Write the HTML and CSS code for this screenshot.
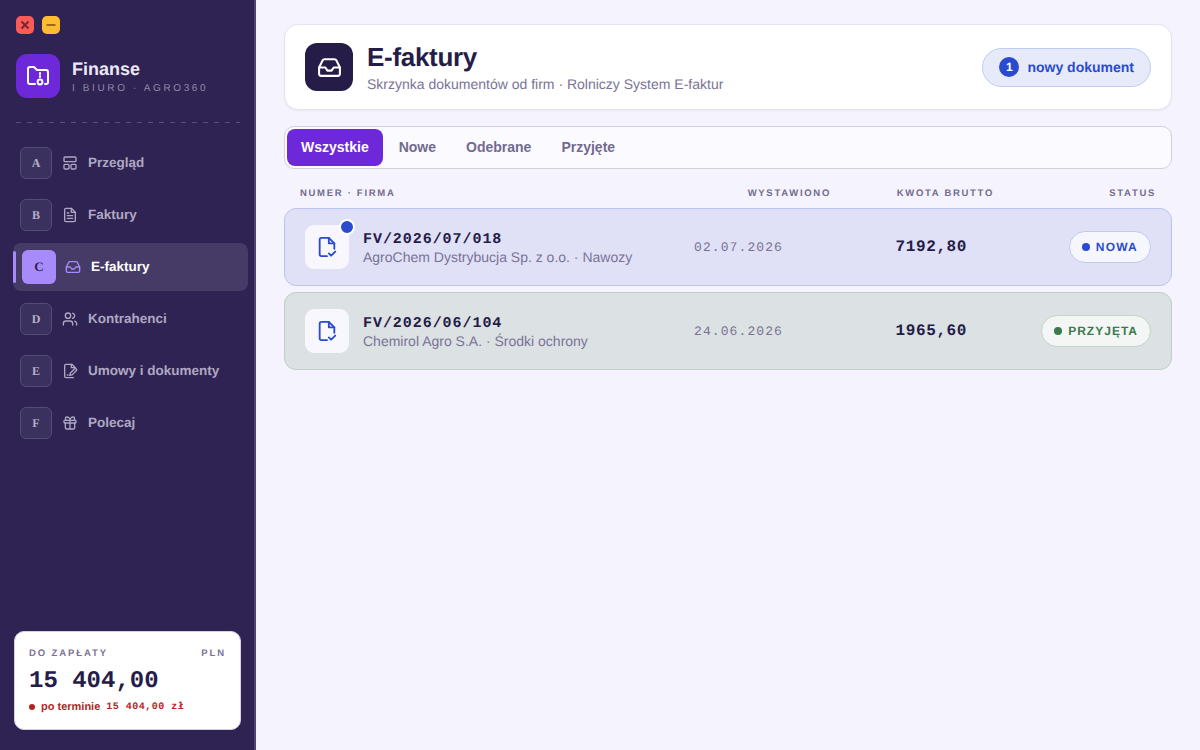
FILE: index.html
```html
<!DOCTYPE html>
<html lang="pl">
<head>
    <meta charset="UTF-8">
    <title>E-faktury</title>
    <link rel="stylesheet" href="styles.css">
</head>
<body>
    <aside class="sidebar">
        <div class="win-buttons">
            <span class="win-btn win-close">
                <svg viewBox="0 0 10 10" width="10" height="10"><path d="M1.5 1.5l7 7M8.5 1.5l-7 7"/></svg>
            </span>
            <span class="win-btn win-min">
                <svg viewBox="0 0 10 10" width="10" height="10"><path d="M0.5 5h9"/></svg>
            </span>
        </div>

        <div class="brand">
            <div class="brand-logo">
                <svg viewBox="0 0 24 24" width="24" height="24" class="ico"><path d="M9 20H4a2 2 0 0 1-2-2V5a2 2 0 0 1 2-2h4l3 3h9a2 2 0 0 1 2 2v10a2 2 0 0 1-2 2h-1"/><path d="M14 9v1M14 12v1"/><circle cx="14" cy="18" r="2.4"/></svg>
            </div>
            <div>
                <div class="brand-name">Finanse</div>
                <div class="brand-sub">I BIURO · AGRO360</div>
            </div>
        </div>

        <div class="divider"></div>

        <nav class="nav">
            <a class="nav-item">
                <span class="nav-key">A</span>
                <svg viewBox="0 0 24 24" width="16" height="16" class="ico"><rect x="3" y="3" width="18" height="7" rx="1.5"/><rect x="3" y="14" width="7.5" height="7" rx="1.5"/><rect x="13.5" y="14" width="7.5" height="7" rx="1.5"/></svg>
                <span>Przegląd</span>
            </a>
            <a class="nav-item">
                <span class="nav-key">B</span>
                <svg viewBox="0 0 24 24" width="16" height="16" class="ico"><path d="M14 2H6a2 2 0 0 0-2 2v16a2 2 0 0 0 2 2h12a2 2 0 0 0 2-2V8z"/><path d="M14 2v6h6M8 13h8M8 17h8M8 9h2"/></svg>
                <span>Faktury</span>
            </a>
            <a class="nav-item active">
                <span class="nav-key">C</span>
                <svg viewBox="0 0 24 24" width="16" height="16" class="ico"><path d="M22 12h-6l-2 3h-4l-2-3H2"/><path d="M5.45 5.11L2 12v6a2 2 0 0 0 2 2h16a2 2 0 0 0 2-2v-6l-3.45-6.89A2 2 0 0 0 16.76 4H7.24a2 2 0 0 0-1.79 1.11z"/></svg>
                <span>E-faktury</span>
            </a>
            <a class="nav-item">
                <span class="nav-key">D</span>
                <svg viewBox="0 0 24 24" width="16" height="16" class="ico"><path d="M16 21v-2a4 4 0 0 0-4-4H6a4 4 0 0 0-4 4v2"/><circle cx="9" cy="7" r="4"/><path d="M22 21v-2a4 4 0 0 0-3-3.87M16 3.13a4 4 0 0 1 0 7.75"/></svg>
                <span>Kontrahenci</span>
            </a>
            <a class="nav-item">
                <span class="nav-key">E</span>
                <svg viewBox="0 0 24 24" width="16" height="16" class="ico"><path d="M20 7.5V7l-5-5H6a2 2 0 0 0-2 2v16a2 2 0 0 0 2 2h11"/><path d="M14 2v5h5"/><path d="M21.4 11.6a1.9 1.9 0 0 0-2.7-2.7l-6.2 6.2-.8 3.5 3.5-.8z"/><path d="M8 18h1"/></svg>
                <span>Umowy i dokumenty</span>
            </a>
            <a class="nav-item">
                <span class="nav-key">F</span>
                <svg viewBox="0 0 24 24" width="16" height="16" class="ico"><rect x="3" y="8" width="18" height="4" rx="1"/><path d="M12 8v13M19 12v7a2 2 0 0 1-2 2H7a2 2 0 0 1-2-2v-7"/><path d="M7.5 8a2.5 2.5 0 0 1 0-5C9.5 3 12 5 12 8c0-3 2.5-5 4.5-5a2.5 2.5 0 0 1 0 5"/></svg>
                <span>Polecaj</span>
            </a>
        </nav>

        <div class="due-card">
            <div class="due-top">
                <span>DO ZAPŁATY</span>
                <span>PLN</span>
            </div>
            <div class="due-amount">15 404,00</div>
            <div class="due-note">
                <span class="dot"></span>
                <span>po terminie</span>
                <span class="due-note-num">15 404,00 zł</span>
            </div>
        </div>
    </aside>

    <main class="main">
        <header class="head-card">
            <div class="head-icon">
                <svg viewBox="0 0 24 24" width="25" height="25" class="ico"><path d="M22 12h-6l-2 3h-4l-2-3H2"/><path d="M5.45 5.11L2 12v6a2 2 0 0 0 2 2h16a2 2 0 0 0 2-2v-6l-3.45-6.89A2 2 0 0 0 16.76 4H7.24a2 2 0 0 0-1.79 1.11z"/></svg>
            </div>
            <div class="head-text">
                <h1>E-faktury</h1>
                <p>Skrzynka dokumentów od firm · Rolniczy System E-faktur</p>
            </div>
            <div class="new-pill">
                <span class="new-count">1</span>
                <span>nowy dokument</span>
            </div>
        </header>

        <div class="tabs">
            <button class="tab active">Wszystkie</button>
            <button class="tab">Nowe</button>
            <button class="tab">Odebrane</button>
            <button class="tab">Przyjęte</button>
        </div>

        <div class="table-head">
            <span>NUMER · FIRMA</span>
            <span class="right">WYSTAWIONO</span>
            <span class="right">KWOTA BRUTTO</span>
            <span class="right">STATUS</span>
        </div>

        <div class="row row-new">
            <div class="doc-icon">
                <svg viewBox="0 0 24 24" width="22" height="22" class="ico"><path d="M12 22H6a2 2 0 0 1-2-2V4a2 2 0 0 1 2-2h8l6 6v6"/><path d="M14 2v6h6"/><path d="M14 19l2.5 2.5L21 17"/></svg>
                <span class="doc-badge"></span>
            </div>
            <div class="doc-info">
                <div class="doc-num">FV/2026/07/018</div>
                <div class="doc-firm">AgroChem Dystrybucja Sp. z o.o. · Nawozy</div>
            </div>
            <div class="doc-date">02.07.2026</div>
            <div class="doc-amount">7192,80</div>
            <div class="doc-status">
                <span class="status status-new"><span class="dot"></span>NOWA</span>
            </div>
        </div>

        <div class="row row-ok">
            <div class="doc-icon">
                <svg viewBox="0 0 24 24" width="22" height="22" class="ico"><path d="M12 22H6a2 2 0 0 1-2-2V4a2 2 0 0 1 2-2h8l6 6v6"/><path d="M14 2v6h6"/><path d="M14 19l2.5 2.5L21 17"/></svg>
            </div>
            <div class="doc-info">
                <div class="doc-num">FV/2026/06/104</div>
                <div class="doc-firm">Chemirol Agro S.A. · Środki ochrony</div>
            </div>
            <div class="doc-date">24.06.2026</div>
            <div class="doc-amount">1965,60</div>
            <div class="doc-status">
                <span class="status status-ok"><span class="dot"></span>PRZYJĘTA</span>
            </div>
        </div>
    </main>
</body>
</html>
```

FILE: styles.css
```css
* {
    box-sizing: border-box;
}
html, body {
    height: 100%;
}
body {
    margin: 0;
    display: flex;
    overflow: hidden;
    font-family: "Liberation Sans", Arial, sans-serif;
    text-rendering: geometricPrecision;
    background-color: #f5f3fd;
    color: #251c48;
}
.ico {
    fill: none;
    stroke: currentColor;
    stroke-width: 2;
    stroke-linecap: round;
    stroke-linejoin: round;
    flex: none;
}

/* sidebar */
.sidebar {
    width: 256px;
    flex: none;
    display: flex;
    flex-direction: column;
    padding: 16px 14px 20px 16px;
    background-color: #2e2353;
    border-right: 2px solid #4d4470;
}
.win-buttons {
    display: flex;
    gap: 8px;
    margin-bottom: 20px;
}
.win-btn {
    width: 18px;
    height: 18px;
    border-radius: 5px;
    display: flex;
    align-items: center;
    justify-content: center;
}
.win-btn svg {
    fill: none;
    stroke-width: 1.9;
}
.win-close {
    background-color: #fb5a57;
}
.win-close svg {
    stroke: #74282f;
}
.win-min {
    background-color: #febc2e;
}
.win-min svg {
    stroke: #8f6a18;
}
.brand {
    display: flex;
    align-items: center;
    gap: 12px;
    margin-bottom: 24px;
}
.brand-logo {
    width: 44px;
    height: 44px;
    border-radius: 11px;
    background-color: #6d28d9;
    color: #fff;
    display: flex;
    align-items: center;
    justify-content: center;
}
.brand-name {
    font-size: 18px;
    font-weight: 700;
    line-height: 21px;
    margin-top: 1px;
    color: #ece8f8;
}
.brand-sub {
    font-size: 10px;
    line-height: 13px;
    margin-top: 2px;
    letter-spacing: 2.62px;
    color: #8f88a9;
}
.divider {
    height: 1px;
    margin: 0 0 24px;
    width: 224px;
    background-image: repeating-linear-gradient(to right, #565075 0 5px, transparent 5px 11px);
}
.nav {
    display: flex;
    flex-direction: column;
    gap: 20px;
    margin-left: 4px;
}
.nav-item {
    display: flex;
    align-items: center;
    gap: 10px;
    height: 32px;
    font-size: 13.5px;
    font-weight: 700;
    color: #aea8c2;
}
.nav-item span:last-child {
    margin-top: -1px;
}
.nav-key {
    width: 32px;
    height: 32px;
    border-radius: 6px;
    border: 1px solid #544b76;
    background-color: #3b315f;
    display: flex;
    align-items: center;
    justify-content: center;
    font-family: "Liberation Serif", serif;
    font-size: 12px;
    font-weight: 700;
    color: #b5afc8;
}
.nav-item.active {
    height: 48px;
    margin: -8px 0 -8px -7px;
    width: 235px;
    padding-left: 9px;
    gap: 9px;
    position: relative;
    border-radius: 8px;
    background-color: #463a66;
    color: #fff;
}
.nav-item.active::before {
    content: "";
    position: absolute;
    left: 0;
    top: 8px;
    bottom: 8px;
    width: 3px;
    border-radius: 2px;
    background-color: #a78bfa;
}
.nav-item.active .nav-key {
    width: 34px;
    height: 34px;
    border: none;
    background-color: #a78bfa;
    color: #2e2353;
    font-size: 13px;
}
.nav-item.active .ico {
    color: #a78bfa;
    margin-right: 1px;
}
.due-card {
    margin-top: auto;
    margin-left: -2px;
    width: 227px;
    height: 99px;
    padding: 16px 14px 0;
    border-radius: 10px;
    border: 1px solid #d6d2e4;
    background-color: #fff;
}
.due-top {
    display: flex;
    justify-content: space-between;
    font-size: 9.5px;
    font-weight: 700;
    letter-spacing: 1.9px;
    color: #7a7396;
}
.due-amount {
    margin-top: 9px;
    font-family: "Liberation Mono", monospace;
    font-size: 24px;
    font-weight: 700;
    line-height: 27px;
    color: #251c48;
}
.due-note {
    margin-top: 6px;
    display: flex;
    align-items: center;
    gap: 6px;
    font-size: 11px;
    font-weight: 700;
    color: #b3261e;
}
.due-note .dot {
    width: 6px;
    height: 6px;
    background-color: #b3261e;
}
.due-note-num {
    font-family: "Liberation Mono", monospace;
    font-size: 10px;
    letter-spacing: 0.5px;
}
.dot {
    display: inline-block;
    border-radius: 50%;
    flex: none;
}

/* main */
.main {
    flex: 1;
    padding: 24px 28px;
}
.head-card {
    height: 86px;
    display: flex;
    align-items: center;
    gap: 14px;
    padding: 0 20px;
    border-radius: 14px;
    border: 1px solid #e6e3f0;
    background-color: #fff;
    box-shadow: 0 1px 2px rgba(37, 28, 72, 0.06);
}
.head-icon {
    width: 48px;
    height: 48px;
    border-radius: 12px;
    background-color: #251c48;
    color: #fff;
    display: flex;
    align-items: center;
    justify-content: center;
}
.head-text {
    flex: 1;
}
.head-text h1 {
    margin: -1px 0 0;
    font-size: 26px;
    line-height: 30px;
    font-weight: 700;
    letter-spacing: -0.3px;
    color: #251c48;
}
.head-text p {
    margin: 4px 0 0;
    font-size: 14px;
    line-height: 16px;
    color: #7a7396;
}
.new-pill {
    height: 39px;
    display: flex;
    align-items: center;
    gap: 8px;
    padding: 0 16px;
    border-radius: 20px;
    border: 1px solid #c0cbf0;
    background-color: #e7ebf9;
    font-size: 14px;
    font-weight: 700;
    color: #2a4bd0;
}
.new-count {
    width: 20px;
    height: 20px;
    border-radius: 50%;
    background-color: #2a4bd0;
    color: #fff;
    font-size: 12px;
    display: flex;
    align-items: center;
    justify-content: center;
}
.tabs {
    height: 43px;
    margin-top: 16px;
    padding: 2px;
    display: flex;
    gap: 2px;
    border-radius: 10px;
    border: 1px solid #d3cfe0;
    background-color: #fbfaff;
}
.tab {
    border: none;
    border-radius: 8px;
    background: none;
    padding: 0 14px 2px;
    font-family: inherit;
    font-size: 14px;
    font-weight: 700;
    color: #726b8e;
}
.tab.active {
    background-color: #6d28d9;
    color: #fff;
}
.table-head,
.row {
    display: grid;
    align-items: center;
}
.table-head {
    grid-template-columns: 1fr 140px 163px 162px;
    height: 39px;
    padding: 9px 16px 0;
    font-size: 9.5px;
    font-weight: 700;
    letter-spacing: 1.7px;
    color: #726b8e;
}
.right {
    text-align: right;
}
.row {
    grid-template-columns: 44px 1fr 120px 176px 160px;
    height: 78px;
    padding: 0 20px;
    margin-bottom: 6px;
    border-radius: 12px;
    border: 1px solid;
}
.row-new {
    background-color: #e0e0f7;
    border-color: #bcc3ee;
}
.row-ok {
    background-color: #dce1e3;
    border-color: #bfcfc6;
}
.doc-icon {
    width: 44px;
    height: 44px;
    position: relative;
    border-radius: 9px;
    background-color: #f7f7fd;
    color: #2a4bd0;
    display: flex;
    align-items: center;
    justify-content: center;
}
.doc-badge {
    position: absolute;
    top: -6px;
    right: -6px;
    width: 16px;
    height: 16px;
    border-radius: 50%;
    border: 2px solid #fff;
    background-color: #2a4bd0;
}
.doc-info {
    padding: 2px 0 0 14px;
}
.doc-num {
    font-family: "Liberation Mono", monospace;
    font-size: 15px;
    font-weight: 700;
    line-height: 18px;
    letter-spacing: 0.95px;
    color: #251c48;
}
.doc-firm {
    font-size: 14px;
    line-height: 17px;
    color: #7a7396;
}
.doc-date {
    font-family: "Liberation Mono", monospace;
    font-size: 13px;
    letter-spacing: 1.1px;
    margin-left: -1px;
    color: #7a7396;
}
.doc-amount {
    font-family: "Liberation Mono", monospace;
    font-size: 16px;
    font-weight: 700;
    letter-spacing: 0.6px;
    text-align: right;
    padding-right: 24px;
    color: #251c48;
}
.doc-status {
    display: flex;
    justify-content: flex-end;
}
.status {
    height: 32px;
    display: inline-flex;
    align-items: center;
    gap: 6px;
    padding: 0 12px;
    border-radius: 16px;
    border: 1px solid;
    background-color: #f6f7fd;
    font-size: 12px;
    font-weight: 700;
    letter-spacing: 1px;
}
.status .dot {
    width: 8px;
    height: 8px;
}
.status-new {
    color: #2a4bd0;
    border-color: #c0cbf0;
    letter-spacing: 1.2px;
}
.status-new .dot {
    background-color: #2a4bd0;
}
.status-ok {
    color: #3a7a4c;
    border-color: #c0d6c8;
    background-color: #f3f6f4;
}
.status-ok .dot {
    background-color: #3a7a4c;
}
```
